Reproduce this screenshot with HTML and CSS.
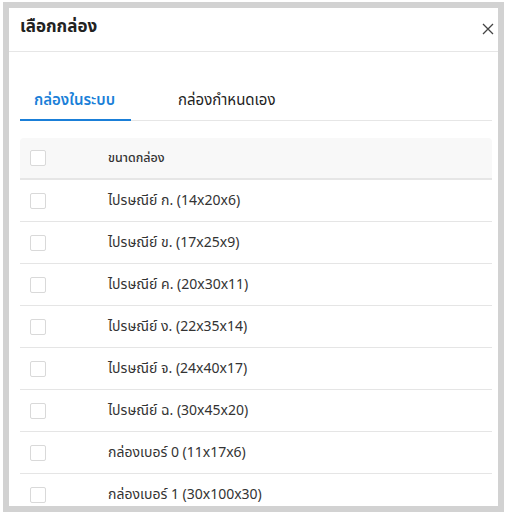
FILE: index.html
```html
<!DOCTYPE html>
<html lang="th">
<head>
<meta charset="utf-8">
<title>เลือกกล่อง</title>
<link rel="stylesheet" href="styles.css">
</head>
<body>
<div class="modal">
  <div class="modal-header">
    <h2 class="modal-title">เลือกกล่อง</h2>
    <button class="close" aria-label="close">
      <svg width="12" height="12" viewBox="0 0 12 12"><path d="M1 1 L11 11 M11 1 L1 11" stroke="#444" stroke-width="1.3" fill="none"/></svg>
    </button>
  </div>
  <div class="modal-body">
    <div class="tabs">
      <div class="tab active">กล่องในระบบ</div>
      <div class="tab">กล่องกำหนดเอง</div>
    </div>
    <div class="table">
      <div class="row head"><span class="cb"></span><span class="cell">ขนาดกล่อง</span></div>
      <div class="row"><span class="cb"></span><span class="cell">ไปรษณีย์ ก. (14x20x6)</span></div>
      <div class="row"><span class="cb"></span><span class="cell">ไปรษณีย์ ข. (17x25x9)</span></div>
      <div class="row"><span class="cb"></span><span class="cell">ไปรษณีย์ ค. (20x30x11)</span></div>
      <div class="row"><span class="cb"></span><span class="cell">ไปรษณีย์ ง. (22x35x14)</span></div>
      <div class="row"><span class="cb"></span><span class="cell">ไปรษณีย์ จ. (24x40x17)</span></div>
      <div class="row"><span class="cb"></span><span class="cell">ไปรษณีย์ ฉ. (30x45x20)</span></div>
      <div class="row"><span class="cb"></span><span class="cell">กล่องเบอร์ 0 (11x17x6)</span></div>
      <div class="row"><span class="cb"></span><span class="cell">กล่องเบอร์ 1 (30x100x30)</span></div>
    </div>
  </div>
</div>
</body>
</html>
```

FILE: styles.css
```css
* { box-sizing: border-box; }
html, body { margin: 0; padding: 0; background: #fff; overflow: hidden; }
body {
  padding: 2px 0 0 3px;
  font-family: "Noto Sans Thai", "Noto Sans", "Liberation Sans", sans-serif;
  color: #333;
}
.modal {
  width: 501px;
  height: 510px;
  border: 6px solid #d2d2d2;
  background: #fff;
  overflow: hidden;
}
.modal-header {
  position: relative;
  height: 44px;
  display: flex;
  align-items: center;
  justify-content: space-between;
  padding: 0 4px 0 11px;
}
.modal-header::after {
  content: "";
  position: absolute;
  left: -12px;
  right: -12px;
  bottom: 0;
  height: 1px;
  background: #e6e6e6;
}
.modal-title {
  margin: 0;
  font-size: 17px;
  font-weight: 700;
  color: #222;
  line-height: 24px;
  padding-bottom: 6px;
}
.close {
  border: 0;
  background: none;
  padding: 0;
  width: 12px;
  height: 12px;
  margin-top: -2px;
  display: flex;
}
.modal-body {
  padding: 28px 6px 0 11px;
}
.tabs {
  display: flex;
  border-bottom: 1px solid #e6e6e6;
  height: 41px;
}
.tab {
  padding: 11px 15px 0 15px;
  line-height: 20px;
  font-size: 15px;
  color: #222;
  height: 40px;
}
.tab + .tab { margin-left: 32px; }
.tab.active {
  color: #1a7fd8;
  font-weight: 600;
  border-bottom: 2px solid #1a7fd8;
  height: 41px;
  width: 111px;
  padding-left: 14px;
  padding-right: 14px;
}
.table {
  margin-top: 17px;
}
.row {
  display: flex;
  align-items: center;
  height: 42px;
  border-bottom: 1px solid #e5e5e5;
  font-size: 14px;
  color: #333;
}
.row.head {
  background: #f8f8f8;
  border-radius: 4px 4px 0 0;
  font-size: 12.5px;
  font-weight: 500;
  border-bottom: 2px solid #e6e6e6;
}
.cb {
  width: 16px;
  height: 16px;
  border: 1px solid #d9d9d9;
  border-radius: 2px;
  background: #fff;
  margin-left: 10px;
}
.cell {
  margin-left: 62px;
}
```
